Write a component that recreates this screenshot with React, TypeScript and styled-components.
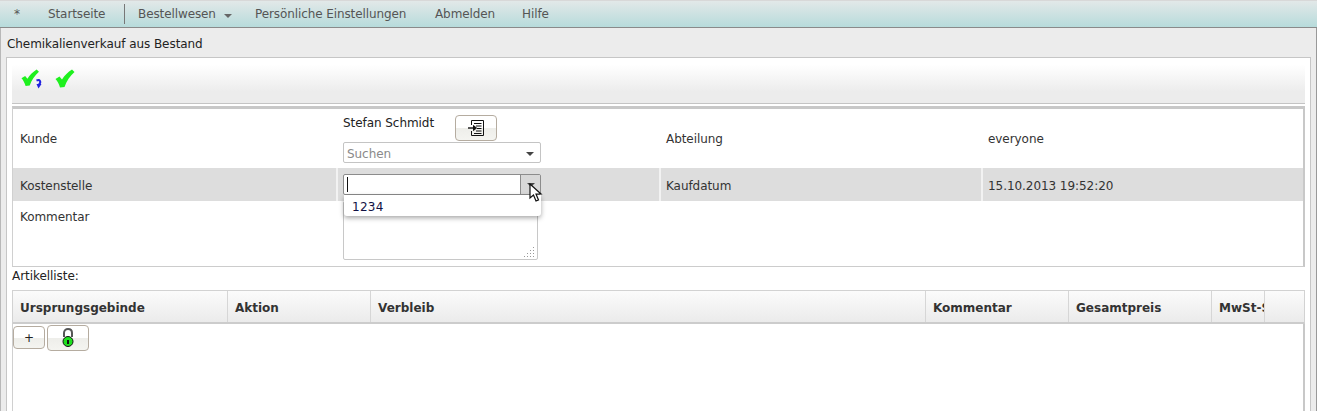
import React from "react";
import styled, { createGlobalStyle } from "styled-components";

const GlobalStyle = createGlobalStyle`
  html, body {
    margin: 0;
    padding: 0;
    background: #ffffff;
    overflow: hidden;
  }
  body {
    font-family: "DejaVu Sans", Verdana, sans-serif;
    font-size: 12px;
    letter-spacing: -0.06px;
    color: #333333;
  }
`;

const Page = styled.div`
  width: 1317px;
  height: 411px;
  overflow: hidden;
  display: flex;
  flex-direction: column;
`;

const MenuBar = styled.nav`
  height: 26px;
  flex: none;
  display: flex;
  align-items: center;
  border-top: 1px solid #d8d8d8;
  border-bottom: 1px solid #8a8a8a;
  background: linear-gradient(to bottom, #e2e8e8 0%, #b7dbdb 100%);
  color: #555555;
  letter-spacing: -0.1px;
`;

const MenuItem = styled.a<{ $width: number; $indent?: number; $divider?: boolean }>`
  width: ${(p) => p.$width}px;
  height: 20px;
  flex: none;
  display: flex;
  align-items: center;
  box-sizing: border-box;
  padding-left: ${(p) => p.$indent ?? 0}px;
  white-space: nowrap;
  ${(p) => (p.$divider ? "border-right: 1px solid #777777;" : "")}
`;

const Caret = styled.span`
  display: inline-block;
  margin-left: 8px;
  margin-top: 3px;
  border-left: 4px solid transparent;
  border-right: 4px solid transparent;
  border-top: 4px solid #666666;
`;

const Panel = styled.main`
  flex: 1;
  display: flex;
  flex-direction: column;
  background: #ececec;
  border-left: 1px solid #b8b8b8;
  border-right: 1px solid #999999;
  padding: 0 5px;
  min-height: 0;
`;

const PanelTitle = styled.h1`
  margin: 0;
  height: 29px;
  flex: none;
  display: flex;
  align-items: center;
  padding: 2px 0 0 1px;
  box-sizing: border-box;
  font-size: 12px;
  font-weight: 400;
  color: #222222;
`;

const Content = styled.div`
  flex: 1;
  display: flex;
  flex-direction: column;
  background: #ffffff;
  border: 1px solid #c6c6c6;
  border-bottom: none;
  padding: 0 5px;
  min-height: 0;
`;

const Toolbar = styled.div`
  height: 46px;
  flex: none;
  display: flex;
  align-items: center;
  gap: 14px;
  padding: 0 0 3px 9px;
  box-sizing: border-box;
  background: linear-gradient(to bottom, #ffffff 0%, #ffffff 15%, #ececec 75%, #ececec 100%);
  border-bottom: 1px solid #c4c4c4;
`;

const IconButton = styled.span`
  display: block;
  width: 20px;
  height: 20px;
`;

const FormTable = styled.div`
  margin-top: 2px;
  flex: none;
  border-top: 3px solid #c8c8c8;
  border-bottom: 1px solid #cccccc;
  border-left: 1px solid #d0d0d0;
  border-right: 2px solid #c8c8c8;
  position: relative;
`;

const FormRow = styled.div<{ $height: number; $shaded?: boolean }>`
  height: ${(p) => p.$height}px;
  display: grid;
  grid-template-columns: 323px 323px 322px 1fr;
  background: ${(p) => (p.$shaded ? "#dddddd" : "#ffffff")};
`;

const FormCell = styled.div<{ $shaded?: boolean; $top?: number; $align?: string }>`
  box-sizing: border-box;
  padding: ${(p) => p.$top ?? 0}px 5px 0 5px;
  display: flex;
  align-items: ${(p) => p.$align ?? "center"};
  border-left: 2px solid ${(p) => (p.$shaded ? "#f2f2f2" : "transparent")};
  color: #333333;
  &:first-child {
    border-left: none;
    padding-left: 7px;
  }
`;

const FieldStack = styled.div`
  display: flex;
  flex-direction: column;
  width: 198px;
`;

const NameLine = styled.div`
  display: flex;
  align-items: flex-start;
  gap: 21px;
  color: #222222;
  white-space: nowrap;
`;

const NameText = styled.span`
  margin-top: 1px;
`;

const SmallButton = styled.button<{ $width: number; $height: number; $offset?: number }>`
  width: ${(p) => p.$width}px;
  height: ${(p) => p.$height}px;
  margin-top: ${(p) => p.$offset ?? 0}px;
  padding: 0;
  flex: none;
  display: flex;
  align-items: center;
  justify-content: center;
  border: 1px solid #b5aca0;
  border-radius: 4px;
  background: linear-gradient(to bottom, #ffffff 0%, #ffffff 50%, #eeeeea 52%, #f4f4f0 100%);
  font-family: inherit;
  font-size: 12px;
  color: #222222;
`;

const SelectBox = styled.div`
  margin-top: 1px;
  height: 21px;
  box-sizing: border-box;
  display: flex;
  align-items: center;
  justify-content: space-between;
  padding: 2px 6px 0 3px;
  border: 1px solid #c4c4c4;
  border-radius: 2px;
  color: #8a8a8a;
`;

const SelectCaret = styled.span`
  border-left: 4px solid transparent;
  border-right: 4px solid transparent;
  border-top: 4px solid #444444;
`;

const ComboBox = styled.div`
  width: 198px;
  height: 21px;
  flex: none;
  box-sizing: border-box;
  display: flex;
  border: 1px solid #8c8c8c;
  border-radius: 2px;
  background: #ffffff;
`;

const ComboInput = styled.div`
  flex: 1;
  display: flex;
  align-items: center;
  padding-left: 3px;
`;

const TextCursor = styled.span`
  width: 1px;
  height: 15px;
  background: #111111;
`;

const ComboToggle = styled.div`
  width: 19px;
  display: flex;
  align-items: center;
  justify-content: center;
  background: #d8d8d8;
  border-left: 1px solid #8c8c8c;
`;

const Popup = styled.div`
  position: absolute;
  left: 331px;
  top: 86px;
  width: 197px;
  height: 21px;
  display: flex;
  align-items: center;
  padding: 2px 0 0 8px;
  box-sizing: border-box;
  background: #ffffff;
  border-radius: 0 0 3px 3px;
  box-shadow: 0 2px 5px rgba(0, 0, 0, 0.35);
  color: #111144;
  letter-spacing: 0.3px;
`;

const Pointer = styled.svg`
  position: absolute;
  left: 516px;
  top: 74px;
`;

const TextArea = styled.div`
  width: 195px;
  height: 59px;
  box-sizing: border-box;
  border: 1px solid #c8c8c8;
  border-radius: 2px;
  position: relative;
`;

const ResizeGrip = styled.svg`
  position: absolute;
  right: 1px;
  bottom: 1px;
`;

const ListLabel = styled.div`
  height: 23px;
  flex: none;
  display: flex;
  align-items: center;
  padding-bottom: 6px;
  box-sizing: border-box;
  color: #222222;
`;

const ListHeader = styled.div`
  flex: none;
  height: 34px;
  box-sizing: border-box;
  display: grid;
  grid-template-columns: 215px 143px 555px 143px 143px 53px 1fr;
  border: 1px solid #d2d2d2;
  border-bottom: 2px solid #cccccc;
  background: linear-gradient(to bottom, #fbfbfb 0%, #ebebeb 100%);
`;

const HeaderCell = styled.div`
  box-sizing: border-box;
  display: flex;
  align-items: center;
  padding: 2px 0 0 7px;
  border-right: 1px solid #d6d6d6;
  font-size: 12px;
  font-weight: 700;
  letter-spacing: 0;
  color: #333333;
  overflow: hidden;
  white-space: nowrap;
  &:last-child {
    border-right: none;
  }
`;

const ListBody = styled.div`
  flex: 1;
  display: flex;
  align-items: flex-start;
  gap: 2px;
  padding: 1px 0 0 0;
  border-left: 1px solid #d0d0d0;
  border-right: 2px solid #c8c8c8;
`;

const checkPath =
  "M0.5 10 L4.5 7.5 L7 10.5 C9.5 6.5 13 3 17 0.5 L19.5 3 C15 7 11.5 12 9.5 18 L5 18.5 C4 15 2.5 12 0.5 10 Z";

const columns = ["Ursprungsgebinde", "Aktion", "Verbleib", "Kommentar", "Gesamtpreis", "MwSt-Satz", ""];

export default function App() {
  return (
    <Page>
      <GlobalStyle />
      <MenuBar>
        <MenuItem $width={48} $indent={14}>*</MenuItem>
        <MenuItem $width={77} $divider>Startseite</MenuItem>
        <MenuItem $width={130} $indent={13}>
          Bestellwesen<Caret />
        </MenuItem>
        <MenuItem $width={180}>Persönliche Einstellungen</MenuItem>
        <MenuItem $width={87}>Abmelden</MenuItem>
        <MenuItem $width={60}>Hilfe</MenuItem>
      </MenuBar>
      <Panel>
        <PanelTitle>Chemikalienverkauf aus Bestand</PanelTitle>
        <Content>
          <Toolbar>
            <IconButton>
              <svg width="22" height="22" viewBox="0 0 22 22">
                <path d={checkPath} fill="#1ef01e" transform="scale(0.92)" />
                <path d="M15.5 11.5 C19 10 20.5 13 18 15.5" fill="none" stroke="#2222e0" strokeWidth="2" />
                <path d="M15.5 15 L20.5 15 L17.5 19.5 Z" fill="#2222e0" />
              </svg>
            </IconButton>
            <IconButton>
              <svg width="20" height="20" viewBox="0 0 20 20">
                <path d={checkPath} fill="#1ef01e" />
              </svg>
            </IconButton>
          </Toolbar>
          <FormTable>
            <FormRow $height={59}>
              <FormCell>Kunde</FormCell>
              <FormCell $top={6} $align="flex-start">
                <FieldStack>
                  <NameLine>
                    <NameText>Stefan Schmidt</NameText>
                    <SmallButton $width={42} $height={26}>
                      <svg width="18" height="18" viewBox="0 0 18 18" fill="none" stroke="#111111" strokeWidth="1">
                        <path d="M4.5 6 V1.5 H16.5 V16.5 H4.5 V12" />
                        <path d="M7 4.5 H14.5 M9 7 H14.5 M10 9.5 H14.5 M9 12 H14.5 M7 14.5 H14.5" />
                        <path d="M1 9 H8" strokeWidth="1.4" />
                        <path d="M6.5 6.5 L9.5 9 L6.5 11.5 Z" fill="#111111" />
                      </svg>
                    </SmallButton>
                  </NameLine>
                  <SelectBox>
                    Suchen
                    <SelectCaret />
                  </SelectBox>
                </FieldStack>
              </FormCell>
              <FormCell $top={1}>Abteilung</FormCell>
              <FormCell $top={1}>everyone</FormCell>
            </FormRow>
            <FormRow $height={33} $shaded>
              <FormCell $top={2}>Kostenstelle</FormCell>
              <FormCell $shaded $top={6} $align="flex-start">
                <ComboBox>
                  <ComboInput>
                    <TextCursor />
                  </ComboInput>
                  <ComboToggle>
                    <SelectCaret />
                  </ComboToggle>
                </ComboBox>
              </FormCell>
              <FormCell $shaded $top={2}>Kaufdatum</FormCell>
              <FormCell $shaded $top={2}>15.10.2013 19:52:20</FormCell>
            </FormRow>
            <FormRow $height={65}>
              <FormCell $top={9} $align="flex-start">Kommentar</FormCell>
              <FormCell $align="flex-start">
                <TextArea>
                  <ResizeGrip width="12" height="12" viewBox="0 0 12 12" fill="#999999">
                    <rect x="9" y="1" width="1" height="1" />
                    <rect x="9" y="4" width="1" height="1" />
                    <rect x="6" y="4" width="1" height="1" />
                    <rect x="9" y="7" width="1" height="1" />
                    <rect x="6" y="7" width="1" height="1" />
                    <rect x="3" y="7" width="1" height="1" />
                    <rect x="9" y="10" width="1" height="1" />
                    <rect x="6" y="10" width="1" height="1" />
                    <rect x="3" y="10" width="1" height="1" />
                    <rect x="0" y="10" width="1" height="1" />
                  </ResizeGrip>
                </TextArea>
              </FormCell>
              <FormCell />
              <FormCell />
            </FormRow>
            <Popup>1234</Popup>
            <Pointer width="14" height="20" viewBox="0 0 14 20">
              <path d="M1 1 L1 15 L4.5 12 L7 18 L9.5 17 L7 11 L12 11 Z" fill="#ffffff" stroke="#111111" strokeWidth="1.2" />
            </Pointer>
          </FormTable>
          <ListLabel>Artikelliste:</ListLabel>
          <ListHeader>
            {columns.map((c, i) => (
              <HeaderCell key={i}>{c}</HeaderCell>
            ))}
          </ListHeader>
          <ListBody>
            <SmallButton $width={32} $height={23} $offset={1}>+</SmallButton>
            <SmallButton $width={42} $height={26}>
              <svg width="12" height="20" viewBox="0 0 12 20">
                <path d="M2 9 V5 C2 -0.3 10 -0.3 10 5 V9" fill="none" stroke="#555555" strokeWidth="2" />
                <circle cx="6" cy="13.5" r="5" fill="#1ee01e" stroke="#111111" strokeWidth="1" />
                <rect x="5" y="12" width="2" height="4" fill="#111111" />
              </svg>
            </SmallButton>
          </ListBody>
        </Content>
      </Panel>
    </Page>
  );
}
